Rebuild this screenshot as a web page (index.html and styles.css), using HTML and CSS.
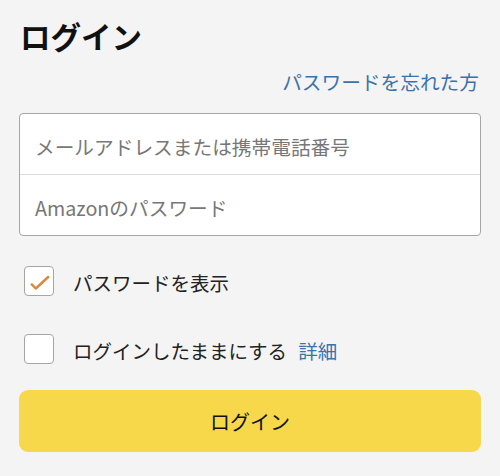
FILE: index.html
```html
<!DOCTYPE html>
<html lang="ja">
<head>
<meta charset="utf-8">
<title>ログイン</title>
<link rel="stylesheet" href="styles.css">
</head>
<body>
<main class="page">
  <h1 class="title">ログイン</h1>
  <div class="forgot"><a href="#" class="link">パスワードを忘れた方</a></div>
  <div class="fields">
    <div class="field">メールアドレスまたは携帯電話番号</div>
    <div class="field">Amazonのパスワード</div>
  </div>
  <div class="check-row first">
    <span class="box">
      <svg width="30" height="30" viewBox="0 0 30 30"><path d="M7.7 18.4 L11.8 22.5 L24.2 11" fill="none" stroke="#d9883a" stroke-width="2.4" stroke-linecap="round" stroke-linejoin="round"/></svg>
    </span>
    <span class="label">パスワードを表示</span>
  </div>
  <div class="check-row second">
    <span class="box"></span>
    <span class="label">ログインしたままにする<a href="#" class="link detail">詳細</a></span>
  </div>
  <button class="submit">ログイン</button>
</main>
</body>
</html>
```

FILE: styles.css
```css
html, body {
  margin: 0;
  padding: 0;
  background: #f4f4f4;
}
body {
  font-family: "Noto Sans CJK JP", "Noto Sans", sans-serif;
  color: #222;
}
.page {
  padding: 0 19px;
  display: flex;
  flex-direction: column;
}
.title {
  margin: 18px 0 0 1px;
  font-size: 30.5px;
  line-height: 36px;
  font-weight: 700;
  color: #111;
}
.forgot {
  margin-top: 16px;
  text-align: right;
  padding-right: 2px;
  font-size: 19.7px;
  line-height: 24px;
}
.link {
  color: #3c72ab;
  text-decoration: none;
}
.fields {
  margin-top: 19px;
  border: 1px solid #a7a7a7;
  border-radius: 4px;
  background: #fff;
  display: flex;
  flex-direction: column;
}
.field {
  height: 60px;
  box-sizing: border-box;
  padding: 4px 0 0 15px;
  display: flex;
  align-items: center;
  font-size: 19.7px;
  color: #777;
}
.field + .field {
  border-top: 1px solid #dcdcdc;
  height: 61px;
}
.check-row {
  display: flex;
  align-items: center;
  margin-left: 5px;
}
.check-row.first {
  margin-top: 30px;
}
.check-row.second {
  margin-top: 38px;
}
.box {
  width: 30px;
  height: 30px;
  box-sizing: border-box;
  border: 1.5px solid #a5a5a5;
  border-radius: 4px;
  background: #fff;
  position: relative;
  flex: none;
}
.box svg {
  position: absolute;
  left: -1.5px;
  top: -1.5px;
}
.label {
  margin-left: 19px;
  padding-top: 3px;
  font-size: 19.5px;
  line-height: 24px;
  color: #222;
}
.detail {
  margin-left: 11px;
}
.submit {
  margin-top: 26px;
  height: 62px;
  border: none;
  border-radius: 9px;
  background: #f7d84b;
  font-family: "Noto Sans CJK JP", "Noto Sans", sans-serif;
  font-size: 20px;
  color: #111;
  padding: 0;
}
```
